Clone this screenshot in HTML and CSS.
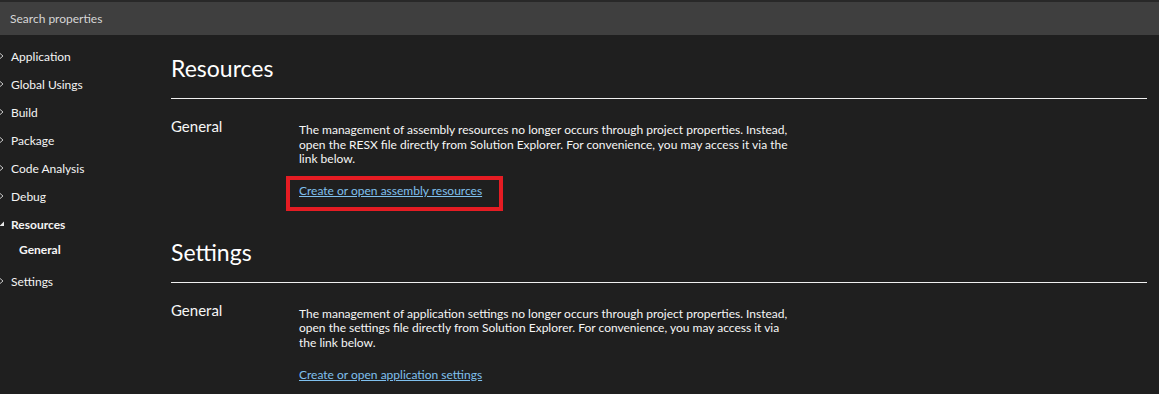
FILE: index.html
```html
<!DOCTYPE html>
<html>
<head>
<meta charset="utf-8">
<link rel="stylesheet" href="styles.css">
</head>
<body>
<div class="top-strip"></div>
<div class="search">Search properties</div>
<div class="layout">
  <nav class="sidebar">
    <div class="nav-item"><span class="icon"><svg width="6" height="8" viewBox="0 0 6 8"><path d="M-0.5 1 L3 4 L-0.5 7" fill="none" stroke="#c8c8c8" stroke-width="1"/></svg></span>Application</div>
    <div class="nav-item"><span class="icon"><svg width="6" height="8" viewBox="0 0 6 8"><path d="M-0.5 1 L3 4 L-0.5 7" fill="none" stroke="#c8c8c8" stroke-width="1"/></svg></span>Global Usings</div>
    <div class="nav-item"><span class="icon"><svg width="6" height="8" viewBox="0 0 6 8"><path d="M-0.5 1 L3 4 L-0.5 7" fill="none" stroke="#c8c8c8" stroke-width="1"/></svg></span>Build</div>
    <div class="nav-item"><span class="icon"><svg width="6" height="8" viewBox="0 0 6 8"><path d="M-0.5 1 L3 4 L-0.5 7" fill="none" stroke="#c8c8c8" stroke-width="1"/></svg></span>Package</div>
    <div class="nav-item"><span class="icon"><svg width="6" height="8" viewBox="0 0 6 8"><path d="M-0.5 1 L3 4 L-0.5 7" fill="none" stroke="#c8c8c8" stroke-width="1"/></svg></span>Code Analysis</div>
    <div class="nav-item"><span class="icon"><svg width="6" height="8" viewBox="0 0 6 8"><path d="M-0.5 1 L3 4 L-0.5 7" fill="none" stroke="#c8c8c8" stroke-width="1"/></svg></span>Debug</div>
    <div class="nav-item active"><span class="icon"><svg width="6" height="8" viewBox="0 0 6 8"><path d="M4 1.5 L4 6 L-0.5 6 Z" fill="#e8e8e8"/></svg></span>Resources</div>
    <div class="nav-sub">General</div>
    <div class="nav-item"><span class="icon"><svg width="6" height="8" viewBox="0 0 6 8"><path d="M-0.5 1 L3 4 L-0.5 7" fill="none" stroke="#c8c8c8" stroke-width="1"/></svg></span>Settings</div>
  </nav>
  <main class="content">
    <section class="section">
      <h1 class="title">Resources</h1>
      <div class="row">
        <h2 class="label">General</h2>
        <div class="desc">
          <p class="text">The management of assembly resources no longer occurs through project properties. Instead, open the RESX file directly from Solution Explorer. For convenience, you may access it via the link below.</p>
          <a class="link highlighted" href="#">Create or open assembly resources</a>
        </div>
      </div>
    </section>
    <section class="section second">
      <h1 class="title">Settings</h1>
      <div class="row">
        <h2 class="label">General</h2>
        <div class="desc">
          <p class="text">The management of application settings no longer occurs through project properties. Instead, open the settings file directly from Solution Explorer. For convenience, you may access it via the link below.</p>
          <a class="link" href="#">Create or open application settings</a>
        </div>
      </div>
    </section>
  </main>
</div>
</body>
</html>
```

FILE: styles.css
```css
html, body {
  margin: 0;
  padding: 0;
  background: #1f1f1f;
  color: #f6f6f6;
  font-family: "Lato", "Open Sans", sans-serif;
  overflow: hidden;
  height: 394px;
}

.top-strip {
  height: 2px;
  background: #282828;
}

.search {
  height: 33px;
  background: #3f3f3f;
  color: #d6d6d6;
  font-size: 12px;
  line-height: 33px;
  padding-left: 10px;
}

.layout {
  display: flex;
}

.sidebar {
  width: 171px;
  flex: none;
  padding-top: 7px;
  font-size: 12px;
}

.nav-item {
  height: 28px;
  display: flex;
  align-items: center;
  color: #f4f4f4;
}

.nav-item .icon {
  width: 11px;
  flex: none;
  display: flex;
  align-items: center;
}

.nav-item .icon svg {
  display: block;
}

.nav-item.active {
  font-weight: bold;
}

.nav-sub {
  height: 22px;
  display: flex;
  align-items: center;
  padding-left: 19px;
  font-weight: bold;
  margin-bottom: 7px;
}

.content {
  flex: 1;
  padding-right: 12px;
  padding-top: 17px;
}

.section.second {
  margin-top: 37px;
}

.title {
  margin: 0;
  font-size: 23px;
  font-weight: normal;
  line-height: 32px;
  padding-bottom: 14px;
  border-bottom: 1px solid #f0f0f0;
  color: #ffffff;
}

.row {
  display: flex;
  padding-top: 17px;
}

.label {
  margin: 0;
  width: 128px;
  flex: none;
  font-size: 15px;
  font-weight: normal;
  line-height: 20px;
}

.desc {
  padding-top: 7px;
  width: 500px;
  font-size: 12px;
  line-height: 14.5px;
}

.text {
  margin: 0 0 17.5px 0;
}

.link {
  display: inline-block;
  color: #7fc0ee;
  text-decoration: underline;
  position: relative;
}

.link.highlighted::after {
  content: "";
  position: absolute;
  left: -13px;
  right: -21px;
  top: -8px;
  bottom: -12px;
  border: 4px solid #e51c23;
}
```
